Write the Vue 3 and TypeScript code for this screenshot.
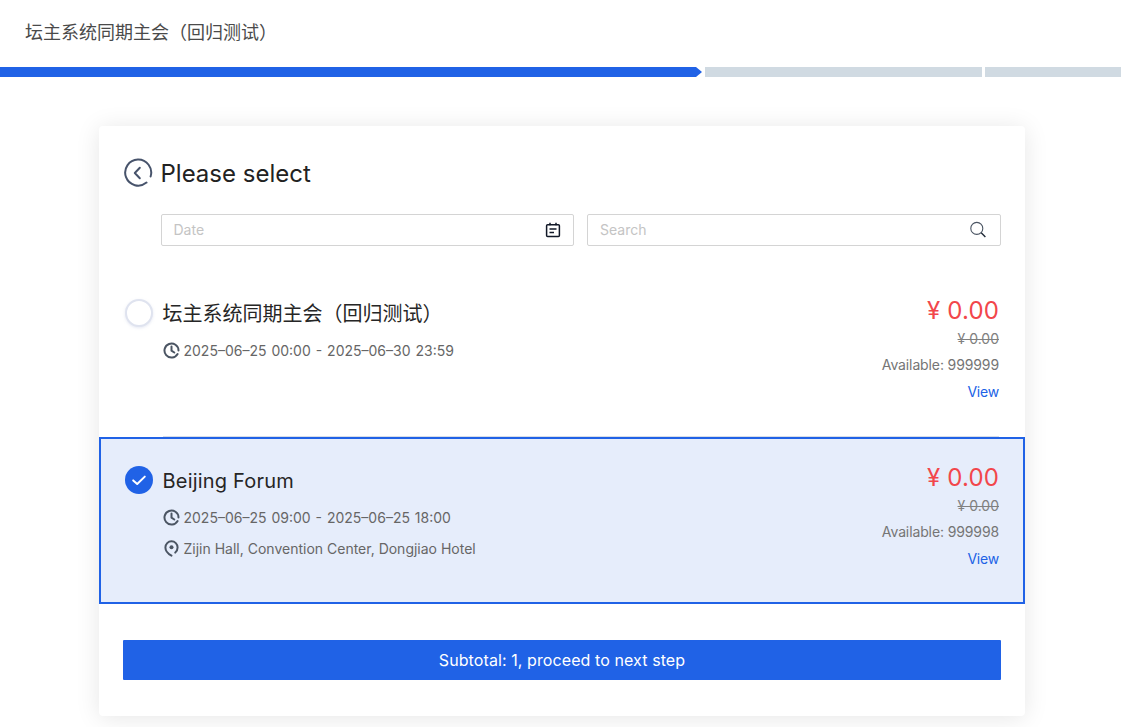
<script setup lang="ts">
interface Item {
  name: string
  time: string
  place?: string
  available: number
  selected: boolean
}
const items: Item[] = [
  { name: '坛主系统同期主会（回归测试）', time: '2025–06–25 00:00 - 2025–06–30 23:59', available: 999999, selected: false },
  { name: 'Beijing Forum', time: '2025–06–25 09:00 - 2025–06–25 18:00', place: 'Zijin Hall, Convention Center, Dongjiao Hotel', available: 999998, selected: true },
]
</script>

<template>
  <div class="page">
    <header class="header">坛主系统同期主会（回归测试）</header>
    <div class="progress">
      <div class="step step-active"></div>
      <div class="step step-two"></div>
      <div class="step step-three"></div>
    </div>
    <main class="card">
      <div class="title-row">
        <svg class="back" width="30" height="30" viewBox="0 0 30 30" fill="none">
          <path d="M23.5 24.6A13 13 0 1 1 27.6 18.5" stroke="#47536b" stroke-width="2" stroke-linecap="round" />
          <path d="M16.8 9.8 11.8 15l5 5.2" stroke="#47536b" stroke-width="2" stroke-linecap="round" stroke-linejoin="round" />
        </svg>
        <h1 class="title">Please select</h1>
      </div>
      <div class="filters">
        <div class="field">
          <span class="placeholder">Date</span>
          <svg class="cal" width="16" height="16" viewBox="0 0 16 16" fill="none" stroke="#111827" stroke-width="1.5">
            <path d="M5 .8v2.5M11 .8v2.5" />
            <rect x="1.6" y="2.8" width="12.8" height="11.6" rx="1" />
            <path d="M4.5 7h7M4.5 10.5h4.5" />
          </svg>
        </div>
        <div class="field">
          <span class="placeholder">Search</span>
          <svg class="glass" width="18" height="18" viewBox="0 0 18 18" fill="none" stroke="#4b5563" stroke-width="1.1">
            <circle cx="7.8" cy="7.4" r="6" />
            <path d="M12.2 11.8 16.4 16" stroke="#1f2937" stroke-width="1.4" />
          </svg>
        </div>
      </div>
      <div class="list">
        <section v-for="item in items" :key="item.name" class="item" :class="{ 'item-selected': item.selected }">
          <div class="mark">
            <span v-if="!item.selected" class="radio"></span>
            <svg v-else width="28" height="28" viewBox="0 0 28 28">
              <circle cx="14" cy="14" r="14" fill="#2062e6" />
              <path d="M8.2 14.4 12.2 18 19.8 10.6" fill="none" stroke="#fff" stroke-width="2" stroke-linecap="round" stroke-linejoin="round" />
            </svg>
          </div>
          <div class="info">
            <h2 class="name">{{ item.name }}</h2>
            <p class="meta meta-time">
              <svg class="meta-icon" width="17" height="17" viewBox="0 0 17 17" fill="none" stroke="#4b5563" stroke-width="2">
                <path d="M14.6 12A7 7 0 1 1 15.5 8.5" stroke-linecap="round" />
                <path d="M8.5 4.5v4.2l2.8 1.8" stroke-linecap="round" stroke-linejoin="round" />
              </svg>
              <span>{{ item.time }}</span>
            </p>
            <p v-if="item.place" class="meta">
              <svg class="meta-icon" width="17" height="17" viewBox="0 0 17 17" fill="none" stroke="#4b5563" stroke-width="2">
                <path d="M8.5 15.6C5 13.6 2.4 10.8 2.4 7.4a6.1 6.1 0 0 1 12.2 0c0 2-1 3.8-2.4 5.2" stroke-linecap="round" />
                <circle cx="8.5" cy="7.2" r="2" fill="#4b5563" stroke="none" />
              </svg>
              <span>{{ item.place }}</span>
            </p>
          </div>
          <div class="pricing">
            <div class="price">¥ 0.00</div>
            <div class="original">¥ 0.00</div>
            <div class="available">Available: {{ item.available }}</div>
            <a class="view">View</a>
          </div>
        </section>
      </div>
      <button class="next" type="button">Subtotal: 1, proceed to next step</button>
    </main>
  </div>
</template>

<style>
html, body { margin: 0; background: #fff; }
</style>

<style scoped>
.page {
  min-height: 727px;
  box-sizing: border-box;
  background: #fff;
  font-family: Inter, "Noto Sans CJK SC", "Liberation Sans", sans-serif;
  overflow: hidden;
}
.header {
  height: 67px;
  box-sizing: border-box;
  padding: 0 25px 6px;
  display: flex;
  align-items: center;
  font-size: 18px;
  color: #4a4a4a;
}
.progress {
  display: flex;
  height: 10px;
  gap: 3px;
}
.step { background: #d0dae2; height: 10px; }
.step-active {
  width: 702px;
  background: #2062e6;
  clip-path: polygon(0 0, 696px 0, 100% 50%, 696px 100%, 0 100%);
}
.step-two { width: 277px; }
.step-three { flex: 1; }
.card {
  width: 926px;
  height: 590px;
  box-sizing: border-box;
  margin: 49px 0 0 99px;
  padding: 24px 24px 0;
  background: #fff;
  border-radius: 4px;
  box-shadow: 0 2px 24px rgba(0, 0, 0, 0.1);
  display: flex;
  flex-direction: column;
}
.title-row {
  display: flex;
  align-items: center;
  gap: 7.5px;
  height: 46px;
}
.back { flex: none; }
.title {
  margin: 2px 0 0;
  font-size: 24px;
  font-weight: 400;
  color: #222;
  line-height: 46px;
}
.filters {
  display: flex;
  gap: 13px;
  margin: 18px 0 0 38px;
}
.field {
  flex: 1;
  height: 32px;
  box-sizing: border-box;
  border: 1px solid #d4d4d4;
  border-radius: 2px;
  padding: 0 12px;
  display: flex;
  align-items: center;
  justify-content: space-between;
}
.field:first-child { flex: none; width: 413px; padding-left: 11.5px; }
.placeholder { font-size: 14px; color: #c4c4c4; margin-top: -1px; }
.glass { margin-right: 1.5px; }
.list {
  margin: 24px -24px 0;
}
.item {
  position: relative;
  height: 167px;
  box-sizing: border-box;
  padding: 29px 26px 0;
  display: flex;
}
.item:first-child::after {
  content: "";
  position: absolute;
  left: 64px;
  right: 26px;
  bottom: 0;
  height: 1px;
  background: #d8dde6;
}
.item-selected {
  border: 2px solid #2062e6;
  background: #e6edfb;
  padding: 27px 24px 0;
}
.item-selected .name { letter-spacing: 0.2px; }
.mark { width: 28px; height: 28px; flex: none; }
.radio {
  display: block;
  box-sizing: border-box;
  width: 28px;
  height: 28px;
  border-radius: 50%;
  border: 2px solid #dfe3ef;
  box-shadow: 0 1px 3px rgba(180, 188, 220, 0.35);
  background: #fff;
}
.info {
  flex: 1;
  padding-left: 9.5px;
}
.name {
  margin: 0;
  font-size: 20px;
  font-weight: 400;
  line-height: 30px;
  color: #262626;
}
.meta {
  margin: 10px 0 0;
  display: flex;
  align-items: center;
  gap: 4px;
  height: 23px;
  font-size: 14px;
  color: #666;
}
.meta-time { word-spacing: 1px; }
.meta + .meta { margin-top: 8px; }
.meta-icon { flex: none; }
.pricing {
  display: flex;
  flex-direction: column;
  align-items: flex-end;
  text-align: right;
  margin-top: -5px;
}
.price {
  font-size: 24px;
  line-height: 34px;
  letter-spacing: 0.15px;
  color: #f2464b;
}
.original {
  font-size: 14px;
  line-height: 20px;
  margin-top: 1px;
  color: #808080;
  text-decoration: line-through;
}
.available {
  font-size: 14px;
  line-height: 20px;
  margin-top: 6px;
  letter-spacing: -0.12px;
  color: #757575;
}
.view {
  font-size: 14px;
  line-height: 20px;
  margin-top: 7px;
  letter-spacing: -0.2px;
  color: #2062e6;
}
.next {
  margin-top: 36px;
  height: 40px;
  width: 100%;
  border: 0;
  border-radius: 1px;
  background: #2062e6;
  color: #fff;
  font: inherit;
  font-size: 16px;
  letter-spacing: 0.09px;
}
</style>
